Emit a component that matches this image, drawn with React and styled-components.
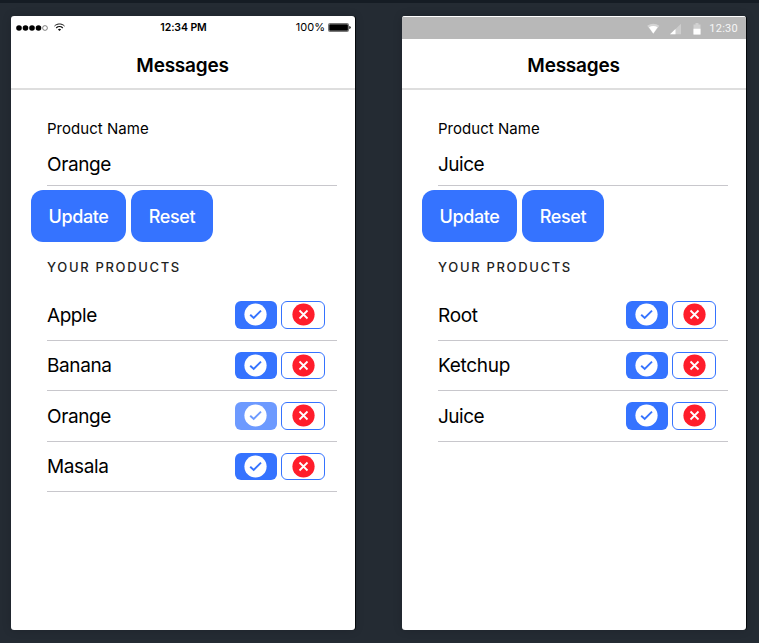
import React from "react";
import styled, { createGlobalStyle } from "styled-components";

const Global = createGlobalStyle`
  * { box-sizing: border-box; }
  body { margin: 0; background: #242b33; font-family: Inter, "Liberation Sans", sans-serif; color: #000; }
`;

const Stage = styled.main`
  display: flex;
  gap: 47px;
  width: 759px;
  height: 643px;
  padding: 13px 0 0 11px;
  border-top: 3px solid #151c24;
  background: #242b33;
  overflow: hidden;
`;

const Phone = styled.section`
  display: flex;
  flex-direction: column;
  width: 344px;
  height: 614px;
  background: #fff;
  border-radius: 3px;
  overflow: hidden;
  box-shadow: 1px 0 0 #05080b, 0 0 10px rgba(0, 0, 0, 0.16);
`;

const IosBar = styled.div`
  display: flex;
  justify-content: space-between;
  align-items: center;
  height: 23px;
  padding: 0 4px 0 5px;
  font-size: 11px;
  line-height: 13px;
`;

const IosSide = styled.div`
  display: flex;
  align-items: center;
  justify-content: ${(p) => (p.$end ? "flex-end" : "flex-start")};
  gap: ${(p) => (p.$end ? "3px" : "6px")};
  width: 90px;
  letter-spacing: 0.05px;
`;

const Clock = styled.span`
  font-size: 10.5px;
  font-weight: 600;
  letter-spacing: -0.1px;
`;

const AndroidBar = styled.div`
  display: flex;
  justify-content: flex-end;
  align-items: center;
  height: 23px;
  padding: 1px 8px 0 0;
  border-top: 1px solid #fff;
  background: #b8b8b8;
  color: #f6f6f6;
  font: 400 11px/13px Roboto, sans-serif;
  letter-spacing: 0.25px;
`;

const AndroidIcons = styled.svg`
  margin-right: 7px;
`;

const Toolbar = styled.header`
  height: 51px;
  border-bottom: 2px solid #dedede;
  text-align: center;
  font-size: 19px;
  font-weight: 600;
  line-height: 53px;
  letter-spacing: -0.22px;
  padding-right: 1px;
`;

const Content = styled.div`
  padding: 30px 18px 0 20px;
`;

const Field = styled.label`
  display: block;
  height: 66px;
  margin-left: 16px;
  border-bottom: 1px solid #c8c7cc;
`;

const Label = styled.span`
  display: block;
  font-size: 15px;
  line-height: 18px;
  letter-spacing: 0.03px;
`;

const Value = styled.span`
  display: block;
  margin-top: 15px;
  font-size: 19px;
  line-height: 24px;
  letter-spacing: ${(p) => p.$track}px;
`;

const Actions = styled.div`
  display: flex;
  gap: 5px;
  margin-top: 4px;
`;

const Button = styled.button`
  width: ${(p) => p.$width}px;
  height: 52px;
  padding: 1px 0 0;
  border: 0;
  border-radius: 12px;
  background: #3573ff;
  color: #fff;
  font: 450 18px/24px Inter, sans-serif;
  letter-spacing: -0.4px;
`;

const ListHeader = styled.h2`
  height: 48.4px;
  margin: 0 0 0 16px;
  font-size: 13px;
  font-weight: 450;
  line-height: 51px;
  letter-spacing: 1.67px;
  color: #222;
`;

const Row = styled.div`
  display: flex;
  align-items: center;
  height: 50.4px;
  margin-left: 16px;
  padding-right: 12px;
  border-bottom: 1px solid #c8c7cc;
`;

const Name = styled.span`
  flex: 1;
  padding-top: 2px;
  font-size: 19px;
  line-height: 24px;
  letter-spacing: ${(p) => p.$track}px;
`;

const IconButton = styled.button`
  display: flex;
  align-items: center;
  justify-content: center;
  width: ${(p) => (p.$outline ? 44 : 42)}px;
  height: 27.4px;
  margin-top: 0.2px;
  margin-left: ${(p) => (p.$outline ? 4 : 0)}px;
  padding: 0 ${(p) => (p.$outline ? 0 : 1)}px 0.4px ${(p) => (p.$outline ? 1 : 0)}px;
  border: ${(p) => (p.$outline ? "1px solid #3573ff" : "0")};
  border-radius: 6px;
  background: ${(p) => (p.$outline ? "#fff" : p.$muted ? "#6d9aff" : "#3573ff")};
  color: ${(p) => (p.$muted ? "#6d9aff" : "#3573ff")};
`;

const CheckIcon = () => (
  <svg width="23" height="23" viewBox="0 0 23 23">
    <circle cx="11.5" cy="11.5" r="11.1" fill="#fff" />
    <path d="M6.2 11.7 9.7 15 17 7.6" fill="none" stroke="currentColor" strokeWidth="1.9" />
  </svg>
);

const CloseIcon = () => (
  <svg width="23" height="23" viewBox="0 0 23 23">
    <circle cx="11.5" cy="11.5" r="11.1" fill="#ff1d2b" />
    <path d="m7.5 7.5 8 8m0-8-8 8" stroke="#fff" strokeWidth="1.8" />
  </svg>
);

const IosStatus = () => (
  <IosBar>
    <IosSide>
      <svg width="32" height="8" viewBox="0 0 32 8">
        {[3, 9.5, 16, 22.5].map((x) => <circle key={x} cx={x} cy="4" r="2.8" />)}
        <circle cx="29" cy="4" r="2.4" fill="#fff" stroke="#333" strokeWidth="0.6" />
      </svg>
      <svg width="11" height="9" viewBox="0 0 11 9" fill="none" stroke="#111">
        <path d="M.5 3C3.2.3 7.8.3 10.5 3" strokeWidth="1" />
        <path d="M2.2 4.9c1.8-1.6 4.8-1.6 6.6 0" strokeWidth="1.3" />
        <path d="M3.9 6.4c1-.8 2.2-.8 3.2 0L5.5 8Z" fill="#111" stroke="none" />
      </svg>
    </IosSide>
    <Clock>12:34 PM</Clock>
    <IosSide $end>
      <span>100%</span>
      <svg width="23" height="9" viewBox="0 0 23 9">
        <rect x=".5" y=".5" width="20" height="8" rx="1" fill="#fff" stroke="#555" strokeWidth=".8" />
        <rect x="1.2" y="1.2" width="18.7" height="6.6" rx=".5" />
        <path d="M21.3 3q1.4.2 1.4 1.5t-1.4 1.5z" />
      </svg>
    </IosSide>
  </IosBar>
);

const AndroidStatus = () => (
  <AndroidBar>
    <AndroidIcons width="55" height="12" viewBox="0 0 55 12" fill="#fff">
      <path d="M.2 2.7Q6.3-1.3 12.4 2.7L6.3 10.8Z" opacity=".4" />
      <path d="M2 4.2Q6.3 1.8 10.6 4.2L6.3 10.5Z" />
      <path d="M23 11.2 34 .8v10.4z" opacity=".3" />
      <path d="m23 11.2 5.5-5.2v5.2z" />
      <path d="M46.5 1.5h2V0h3v1.5h2v10h-7z" opacity=".35" />
      <path d="M46.5 5.7h7v5.8h-7z" />
    </AndroidIcons>
    <span>12:30</span>
  </AndroidBar>
);

const tracking = { Apple: -0.45, Banana: -0.4, Orange: -0.4, Masala: -0.4, Root: -0.3, Ketchup: -0.3, Juice: -0.5 };

const Device = ({ status, value, products, selected }) => (
  <Phone>
    {status}
    <Toolbar>Messages</Toolbar>
    <Content>
      <Field>
        <Label>Product Name</Label>
        <Value $track={tracking[value]}>{value}</Value>
      </Field>
      <Actions>
        <Button $width={95}>Update</Button>
        <Button $width={82}>Reset</Button>
      </Actions>
      <ListHeader>YOUR PRODUCTS</ListHeader>
      {products.map((name) => (
        <Row key={name}>
          <Name $track={tracking[name]}>{name}</Name>
          <IconButton $muted={name === selected} aria-label={`Edit ${name}`}><CheckIcon /></IconButton>
          <IconButton $outline aria-label={`Remove ${name}`}><CloseIcon /></IconButton>
        </Row>
      ))}
    </Content>
  </Phone>
);

export default function App() {
  return (
    <>
      <Global />
      <Stage>
        <Device status={<IosStatus />} value="Orange" products={["Apple", "Banana", "Orange", "Masala"]} selected="Orange" />
        <Device status={<AndroidStatus />} value="Juice" products={["Root", "Ketchup", "Juice"]} />
      </Stage>
    </>
  );
}
